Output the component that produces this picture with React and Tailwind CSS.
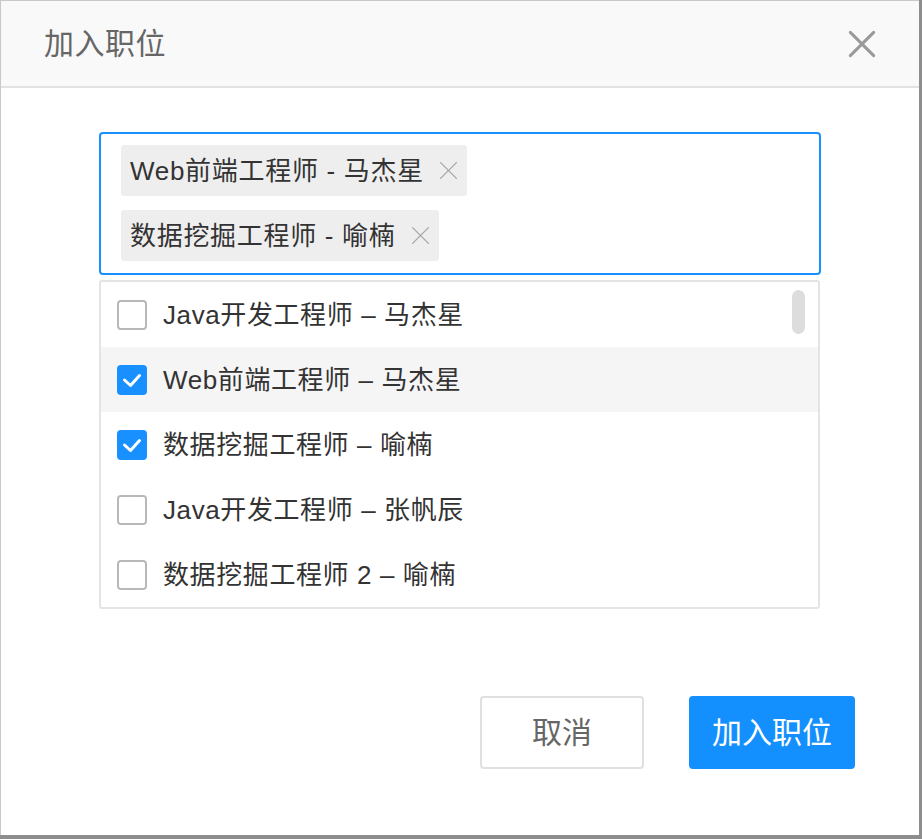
import { useState } from 'react'

const FONT = { fontFamily: '"Liberation Sans", "Noto Sans CJK SC", sans-serif' }

const OPTIONS = [
  { id: 1, label: 'Java开发工程师 – 马杰星' },
  { id: 2, label: 'Web前端工程师 – 马杰星', tag: 'Web前端工程师 - 马杰星' },
  { id: 3, label: '数据挖掘工程师 – 喻楠', tag: '数据挖掘工程师 - 喻楠' },
  { id: 4, label: 'Java开发工程师 – 张帆辰' },
  { id: 5, label: '数据挖掘工程师 2 – 喻楠' },
]

export default function App() {
  const [selected, setSelected] = useState([2, 3])
  const toggle = (id) =>
    setSelected((s) => (s.includes(id) ? s.filter((x) => x !== id) : [...s, id]))

  return (
    <div className="h-[839px] w-[922px] bg-[#8d8d8d]" style={FONT}>
      <div className="flex h-[835px] w-[919px] flex-col border-l border-t border-[#c8c8c8] bg-white">
        <header className="flex h-[87px] shrink-0 items-center justify-between border-b-2 border-[#e2e2e2] bg-[#f9f9f9] pl-[43px] pr-[43px]">
          <h1 className="text-[30px] font-normal leading-none tracking-[0.5px] text-[#666]">加入职位</h1>
          <button className="text-[#9a9a9a]">
            <IconClose className="size-[28px]" />
          </button>
        </header>

        <main className="flex flex-1 flex-col px-[98px] pt-[44px]">
          <div className="flex flex-col items-start gap-[14px] rounded-[4px] border-2 border-[#1890ff] px-[20px] pb-[12px] pt-[11px]">
            {OPTIONS.filter((o) => selected.includes(o.id)).map((o) => (
              <span
                key={o.id}
                className="flex h-[51px] items-center gap-[15px] rounded-[3px] bg-[#eeeeee] pl-[9px] pr-[9px] text-[26px] leading-none tracking-[0.7px] text-[#333]"
              >
                {o.tag ?? o.label}
                <button onClick={() => toggle(o.id)} className="text-[#a5a5a5]">
                  <IconClose className="size-[19px]" strokeWidth={1.6} />
                </button>
              </span>
            ))}
          </div>

          <ul className="relative mt-[5px] mr-[1px] overflow-hidden rounded-[3px] border-2 border-[#e4e4e4]">
            {OPTIONS.map((o) => {
              const on = selected.includes(o.id)
              return (
                <li
                  key={o.id}
                  onClick={() => toggle(o.id)}
                  className={`flex h-[65px] cursor-pointer items-center gap-[16px] pl-[16px] text-[26px] leading-none tracking-[0.6px] text-[#333] ${
                    o.id === 2 ? 'bg-[#f5f5f5]' : ''
                  }`}
                >
                  {on ? (
                    <span className="grid size-[30px] place-items-center rounded-[4px] bg-[#1890ff] text-white">
                      <svg viewBox="0 0 30 30" className="size-[30px]" fill="none" stroke="currentColor" strokeWidth="3" strokeLinecap="round" strokeLinejoin="round">
                        <path d="M7.5 15l6 5.5 9-10" />
                      </svg>
                    </span>
                  ) : (
                    <span className="size-[30px] rounded-[4px] border-2 border-[#b8b8b8] bg-white" />
                  )}
                  {o.label}
                </li>
              )
            })}
            <span className="absolute right-[13px] top-[8px] h-[44px] w-[13px] rounded-full bg-[#dddddd]" />
          </ul>

          <div className="-mr-[34px] mt-[87px] flex justify-end gap-[45px]">
            <button className="h-[73px] w-[164px] rounded-[4px] border-2 border-[#e0e0e0] bg-white text-[30px] leading-none text-[#666]">
              取消
            </button>
            <button className="h-[73px] w-[166px] rounded-[4px] bg-[#148ffe] text-[30px] leading-none text-white">
              加入职位
            </button>
          </div>
        </main>
      </div>
    </div>
  )
}

function IconClose({ strokeWidth = 2.6, ...props }) {
  return (
    <svg viewBox="0 0 24 24" fill="none" stroke="currentColor" strokeWidth={strokeWidth} strokeLinecap="round" {...props}>
      <path d="M2 2 22 22M22 2 2 22" />
    </svg>
  )
}
